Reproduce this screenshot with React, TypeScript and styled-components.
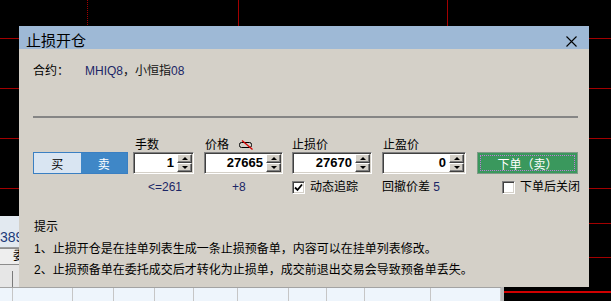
import React from 'react';
import styled, { createGlobalStyle } from 'styled-components';

const FONT = `"Liberation Sans", "Noto Sans CJK SC", sans-serif`;

const GlobalStyle = createGlobalStyle`
  html, body {
    margin: 0;
    padding: 0;
    background: #000;
  }
  body {
    font-family: ${FONT};
    overflow: hidden;
  }
`;

const Desktop = styled.div`
  position: relative;
  width: 611px;
  height: 301px;
  overflow: hidden;
  background: #000;
`;

const ChartGrid = styled.svg`
  position: absolute;
  left: 0;
  top: 0;
`;

/* window behind the dialog (quote panel + order table) */
const BackWindow = styled.div`
  position: absolute;
  left: 0;
  top: 216px;
  width: 504px;
  height: 85px;
  box-sizing: border-box;
  border-right: 3px solid #b8b8b8;
  background: #e2e9f0;
  display: flex;
  flex-direction: column;
`;

const QuoteStrip = styled.div`
  height: 32px;
  box-sizing: border-box;
  padding-top: 13px;
  border-bottom: 1px solid #9c9c9c;
  font-size: 14px;
  line-height: 16px;
  color: #1c3a78;
`;

const ToolBar = styled.div`
  height: 17px;
  display: flex;
  background: #e4e4e4;
`;

const ToolButton = styled.div`
  margin-left: -3px;
  height: 17px;
  box-sizing: border-box;
  padding: 0 8px 0 15px;
  border: 1px solid #8c8c8c;
  background: #eeeeee;
  font-size: 12px;
  line-height: 15px;
  color: #000;
`;

const TableHead = styled.div`
  height: 22px;
  box-sizing: border-box;
  padding-top: 6px;
  background: #e6e6e6;
  display: grid;
  grid-template-columns: 13px 60px 41px 41px 39px 44px 51px 38px 38px 66px 70px;
`;

const TableRow = styled.div`
  flex: 1;
  border-top: 1px solid #a3a3a3;
  background: #eef5fc;
  display: grid;
  grid-template-columns: 13px 60px 41px 41px 39px 44px 51px 38px 38px 66px 70px;
`;

const Cell = styled.div<{ $line: string }>`
  border-right: 1px solid ${(p) => p.$line};
`;

/* dialog */
const Dialog = styled.section`
  position: absolute;
  left: 19px;
  top: 26px;
  width: 570px;
  height: 261px;
  display: flex;
  flex-direction: column;
  background: #d4d0c8;
`;

const TitleBar = styled.header`
  flex: none;
  height: 23px;
  box-sizing: border-box;
  padding: 0 12px 1px 7px;
  background: #9eb9d6;
  display: flex;
  align-items: flex-end;
  justify-content: space-between;
`;

const Title = styled.h1`
  margin: 0;
  font-family: "Noto Sans CJK SC", sans-serif;
  font-size: 15px;
  font-weight: normal;
  line-height: 17px;
  color: #000;
`;

const CloseIcon = styled.svg`
  margin-bottom: 1px;
`;

const Body = styled.div`
  flex: 1;
  padding: 0 11px 0 14px;
  font-size: 12px;
  color: #000;
`;

const ContractRow = styled.div`
  padding-top: 15px;
  line-height: 14px;
  display: flex;
`;

const ContractValue = styled.span`
  margin-left: 16px;
  color: #111;
`;

const Separator = styled.hr`
  margin: 38px 0 0;
  height: 2px;
  border: 0;
  background: #858585;
`;

const ControlRow = styled.div`
  margin-top: 19px;
  display: flex;
`;

const Field = styled.div<{ $w: number; $ml: number }>`
  width: ${(p) => p.$w}px;
  margin-left: ${(p) => p.$ml}px;
  display: flex;
  flex-direction: column;
`;

const Label = styled.div<{ $indent?: number }>`
  height: 15px;
  line-height: 14px;
  padding-left: ${(p) => p.$indent ?? 1}px;
  display: flex;
  align-items: center;
`;

const PriceIcon = styled.svg`
  margin-left: 8px;
`;

const SideToggle = styled.div`
  height: 22px;
  box-sizing: border-box;
  border: 1px solid #3a7fc2;
  display: flex;
`;

const SideOption = styled.div<{ $active?: boolean }>`
  flex: 1;
  display: flex;
  align-items: center;
  justify-content: center;
  background: ${(p) => (p.$active ? '#3f87c7' : '#d9e5f2')};
  color: ${(p) => (p.$active ? '#fff' : '#000')};
  font-family: "Noto Sans CJK SC", sans-serif;
  font-size: 12px;
`;

const SpinFrame = styled.div`
  height: 22px;
  box-sizing: border-box;
  padding: 1px;
  border: 1px solid;
  border-color: #808080 #ffffff #ffffff #808080;
  box-shadow: inset 1px 1px 0 #404040, inset -1px -1px 0 #d4d0c8;
  background: #fff;
  display: flex;
`;

const SpinValue = styled.div`
  flex: 1;
  text-align: right;
  padding-right: 3px;
  font-family: "Liberation Sans", sans-serif;
  font-weight: bold;
  font-size: 13px;
  line-height: 18px;
  color: #000;
`;

const SpinButtons = styled.div`
  width: 15px;
  display: flex;
  flex-direction: column;
`;

const SpinButton = styled.div<{ $down?: boolean }>`
  height: 9px;
  box-sizing: border-box;
  border: 1px solid;
  border-color: #ffffff #404040 #404040 #ffffff;
  box-shadow: inset -1px -1px 0 #808080;
  background: #d4d0c8;
  display: flex;
  align-items: center;
  justify-content: center;

  &::before {
    content: '';
    width: 0;
    height: 0;
    border-left: 3px solid transparent;
    border-right: 3px solid transparent;
    ${(p) =>
      p.$down ? 'border-top: 3px solid #000;' : 'border-bottom: 3px solid #000;'}
  }
`;

const SubmitButton = styled.div`
  position: relative;
  height: 22px;
  box-sizing: border-box;
  border: 1px solid #7f9c88;
  background: #3a985d;
  color: #fff;
  font-family: "Noto Sans CJK SC", sans-serif;
  font-size: 12px;
  display: flex;
  align-items: center;
  justify-content: center;

  &::after {
    content: '';
    position: absolute;
    inset: 2px;
    border: 1px dotted #c07ad8;
  }
`;

const Sub = styled.div<{ $indent: number }>`
  margin-top: 7px;
  height: 13px;
  line-height: 13px;
  padding-left: ${(p) => p.$indent}px;
  display: flex;
  align-items: center;
  white-space: nowrap;
`;

const Navy = styled.span`
  color: #1b2666;
`;

const CheckBox = styled.span`
  width: 13px;
  height: 13px;
  flex: none;
  box-sizing: border-box;
  border: 1px solid;
  border-color: #808080 #ffffff #ffffff #808080;
  box-shadow: inset 1px 1px 0 #404040, inset -1px -1px 0 #d4d0c8;
  background: #fff;
  margin-right: 5px;
  display: flex;
  align-items: center;
  justify-content: center;
`;

const Tips = styled.div`
  margin-top: 23px;
  padding-left: 1px;
  line-height: 21.5px;
`;

const TipLine = styled.div`
  white-space: nowrap;
`;

const TABLE_COLS = 11;

const Spin = ({ value }: { value: string }) => (
  <SpinFrame>
    <SpinValue>{value}</SpinValue>
    <SpinButtons>
      <SpinButton />
      <SpinButton $down />
    </SpinButtons>
  </SpinFrame>
);

const Check = ({ checked }: { checked?: boolean }) => (
  <CheckBox>
    {checked && (
      <svg width="9" height="9" viewBox="0 0 9 9">
        <polyline points="1,4.5 3.5,7 8,1.5" fill="none" stroke="#000" strokeWidth="1.8" />
      </svg>
    )}
  </CheckBox>
);

const App = () => {
  return (
    <Desktop>
      <GlobalStyle />
      <ChartGrid width="611" height="301">
        <g stroke="#a30000" strokeWidth="1" shapeRendering="crispEdges">
          <line x1="0" y1="38.5" x2="611" y2="38.5" />
          <line x1="0" y1="88.5" x2="611" y2="88.5" />
          <line x1="0" y1="138.5" x2="611" y2="138.5" />
          <line x1="0" y1="188.5" x2="611" y2="188.5" />
          <line x1="0" y1="223.5" x2="611" y2="223.5" />
          <line x1="0" y1="257.5" x2="611" y2="257.5" />
          <line x1="87.5" y1="0" x2="87.5" y2="301" strokeDasharray="1 1" />
          <line x1="238.5" y1="0" x2="238.5" y2="301" />
          <line x1="447.5" y1="0" x2="447.5" y2="301" />
        </g>
        <line x1="504" y1="292" x2="611" y2="292" stroke="#d00000" strokeWidth="2" />
      </ChartGrid>

      <BackWindow>
        <QuoteStrip>389</QuoteStrip>
        <ToolBar>
          <ToolButton>委托</ToolButton>
        </ToolBar>
        <TableHead>
          {Array.from({ length: TABLE_COLS }).map((_, i) => (
            <Cell key={i} $line="#7a7a7a" />
          ))}
        </TableHead>
        <TableRow>
          {Array.from({ length: TABLE_COLS }).map((_, i) => (
            <Cell key={i} $line="#c6c6c6" />
          ))}
        </TableRow>
      </BackWindow>

      <Dialog>
        <TitleBar>
          <Title>止损开仓</Title>
          <CloseIcon width="11" height="11" viewBox="0 0 11 11">
            <path d="M0.5 0.5 L10.5 10.5 M10.5 0.5 L0.5 10.5" stroke="#000" strokeWidth="1.1" />
          </CloseIcon>
        </TitleBar>

        <Body>
          <ContractRow>
            合约：
            <ContractValue>
              <Navy>MHIQ8</Navy>，小恒指<Navy>08</Navy>
            </ContractValue>
          </ContractRow>
          <Separator />

          <ControlRow>
            <Field $w={95} $ml={0}>
              <Label />
              <SideToggle>
                <SideOption>买</SideOption>
                <SideOption $active>卖</SideOption>
              </SideToggle>
            </Field>

            <Field $w={61} $ml={5}>
              <Label $indent={2}>手数</Label>
              <Spin value="1" />
              <Sub $indent={15}>
                <Navy>&lt;=261</Navy>
              </Sub>
            </Field>

            <Field $w={79} $ml={10}>
              <Label>
                价格
                <PriceIcon width="18" height="10" viewBox="0 0 18 10">
                  <rect x="2.5" y="2.5" width="12" height="5" rx="2" fill="none" stroke="#000" strokeWidth="1" />
                  <path d="M5 0.5 L15.5 9.5" stroke="#d40000" strokeWidth="1.3" />
                </PriceIcon>
              </Label>
              <Spin value="27665" />
              <Sub $indent={28}>
                <Navy>+8</Navy>
              </Sub>
            </Field>

            <Field $w={80} $ml={9}>
              <Label $indent={0}>止损价</Label>
              <Spin value="27670" />
              <Sub $indent={0}>
                <Check checked />
                动态追踪
              </Sub>
            </Field>

            <Field $w={84} $ml={10}>
              <Label>止盈价</Label>
              <Spin value="0" />
              <Sub $indent={0}>
                回撤价差&nbsp;<Navy>5</Navy>
              </Sub>
            </Field>

            <Field $w={101} $ml={11}>
              <Label />
              <SubmitButton>下单（卖）</SubmitButton>
              <Sub $indent={25}>
                <Check />
                下单后关闭
              </Sub>
            </Field>
          </ControlRow>

          <Tips>
            <TipLine>提示</TipLine>
            <TipLine>1、止损开仓是在挂单列表生成一条止损预备单，内容可以在挂单列表修改。</TipLine>
            <TipLine>2、止损预备单在委托成交后才转化为止损单，成交前退出交易会导致预备单丢失。</TipLine>
          </Tips>
        </Body>
      </Dialog>
    </Desktop>
  );
};

export default App;
